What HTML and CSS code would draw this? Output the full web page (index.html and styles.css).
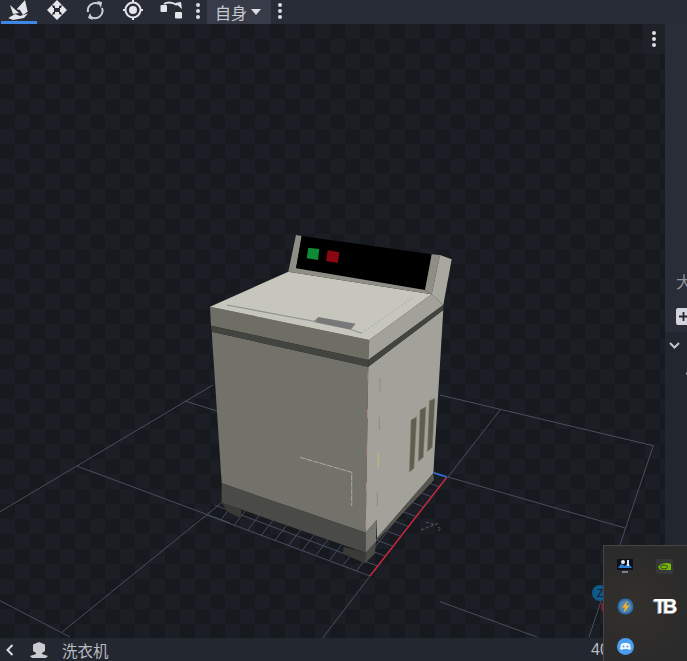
FILE: index.html
```html
<!DOCTYPE html>
<html lang="zh">
<head>
<meta charset="utf-8">
<title>洗衣机</title>
<link rel="stylesheet" href="styles.css">
</head>
<body>
<div class="app">
  <header class="topbar">
    <div class="tool tool-active">
      <svg class="ico" width="36" height="21" viewBox="1 0 36 21"><g fill="#e4e5e8"><path d="M10 5l9 8-6 1z"/><path d="M16.700 9.300L25 0l2.700 11.700L23 15l-3-5z"/><path d="M8.300 18L15 14l5 2 8-2.500L24 18l-11 2z"/></g></svg>
    </div>
    <div class="tool">
      <svg class="ico" width="38" height="21" viewBox="0 0 38 21"><g fill="#e4e5e8"><path d="M19 0l5 5-3 1v2h-4V6l-3-1z"/><path d="M19 20l5-5-3-1v-2h-4v2l-3 1z"/><path d="M9 10l5-5 1 3h1v4h-1l-1 3z"/><path d="M29 10l-5-5-1 3h-1v4h1l1 3z"/></g></svg>
    </div>
    <div class="tool">
      <svg class="ico" width="38" height="21" viewBox="0 0 38 21"><g fill="none" stroke="#cfd0d5" stroke-width="2"><path d="M12 12a7.500 7.500 0 0 1 11-8"/><path d="M26 8a7.500 7.500 0 0 1-11 9"/></g><g fill="#cfd0d5"><path d="M21 1l5 1-1 6z"/><path d="M17 20l-5-2 2-5z"/></g></svg>
    </div>
    <div class="tool">
      <svg class="ico" width="38" height="21" viewBox="0 0 38 21"><circle cx="19" cy="10" r="7.500" fill="none" stroke="#e4e5e8" stroke-width="2"/><circle cx="19" cy="10" r="4" fill="#e4e5e8"/><path d="M19 0v3M19 17v3M9 10h3M26 10h3" stroke="#e4e5e8" stroke-width="2"/></svg>
    </div>
    <div class="tool">
      <svg class="ico" width="38" height="21" viewBox="0 0 38 21"><g fill="#e4e5e8"><rect x="8.500" y="5" width="6.500" height="7" rx="1"/><rect x="23" y="12" width="7" height="6.500" rx="1"/><path d="M23 3l6-1 1 7z"/></g><path d="M12 4c3-2 8-2 13 1" fill="none" stroke="#e4e5e8" stroke-width="2"/></svg>
    </div>
    <div class="dots"><i></i><i></i><i></i></div>
    <button class="space"><span>自身</span><i class="caret"></i></button>
    <div class="dots"><i></i><i></i><i></i></div>
  </header>

  <main class="main">
    <section class="viewport">
      <svg class="scene" width="665" height="614" viewBox="0 24 665 614">
        <g fill="none" stroke="#4a4e5e" stroke-width="1">
          <path d="M0 511.700L213 385M185 401L217 411M76.700 466L230 523M61.700 632.300L221.700 502.700M0 600.700L70 637"/>
          <path d="M440 395L653.300 445.700L589 637M500 410L448 477L625 528M440 601.700L537 637M322 639L370 576"/>
          <path d="M207 515L370 576"/>
        </g>
        <g fill="none" stroke="#474b5c" stroke-width="1">
          <path d="M220.600 520.100l77-99M234.200 525.200l77-99M247.700 530.200l77-99M261.300 535.300l77-99M274.900 540.400l77-99M288.500 545.500l77-99M302.100 550.600l77-99M315.600 555.600l77-99M329.200 560.700l77-99M342.800 565.800l77-99M356.400 570.900l77-99"/>
          <path d="M377.700 566.100l-163-61M385.400 556.200l-163-61M393.100 546.300l-163-61M400.800 536.400l-163-61M408.500 526.500l-163-61M416.200 516.600l-163-61M423.900 506.700l-163-61M431.600 496.800l-163-61M439.300 486.900l-163-61M447 477l-163-61"/>
        </g>
        <path class="axis-x" d="M370 576L447 477"/>
        <path class="axis-z" d="M434 473L447 477"/>

        <path class="m-shadow" d="M221.700 502.700L241.700 510L240 518L228 512Z"/>
        <path class="m-shadow" d="M343.300 546.700L365.700 552.700L365 563.300L343.300 554Z"/>
        <path class="m-foot" d="M365.700 552.700L376 541.700L375 553.300L365 563.300Z"/>

        <path class="m-front" d="M211.700 331.700L368.300 366.700L365.700 532.700L221.700 483.300Z"/>
        <path class="m-base" d="M221.700 483.300L365.700 532.700L365.700 552.700L221.700 502.700Z"/>
        <path class="m-side" d="M368.300 366.700L443.300 310L433.300 473.300L377 538L376.700 520L365.700 532.700Z"/>
        <path class="m-base-side" d="M433.300 473.300L434 480L376 541.700L377 538Z"/>
        <path class="m-corner" d="M365.700 532.700L376.700 520L376 541.700L365.700 552.700Z"/>
        <path class="m-edge" d="M368.200 372L366 530"/>

        <path class="m-strip" d="M210 306.700L369.300 340L368.300 360L211 325.700Z"/>
        <path class="m-band" d="M211 325.700L368.300 360L368.300 366.700L211.700 331.700Z"/>
        <path class="m-side" d="M369.300 340L431.700 294.300L443.300 305L368.300 360Z"/>
        <path class="m-band" d="M368.300 360L443.300 305L443.300 310L368.300 366.700Z"/>
        <path class="m-top" d="M210 306.700L288.300 271.700L431.700 294.300L369.300 340Z"/>

        <path class="m-panel" d="M296 235L301.700 236L296 269L288.300 271.700Z"/>
        <path class="m-screen" d="M301.700 236L431.700 254.300L425 290L296 268.300Z"/>
        <path class="m-panel" d="M296 268.300L425 290L431.700 294.300L288.300 271.700Z"/>
        <path class="m-panel" d="M431.700 254.300L440 255L431.700 294.300L425 290Z"/>
        <path class="m-side-light" d="M440 255L451.700 259.300L443.300 305L431.700 294.300Z"/>
        <path class="m-green" d="M308.300 247.700L319.300 249L318 260L306.700 258.300Z"/>
        <path class="m-red" d="M327.700 250.300L339.300 252.300L337.700 263L326 261Z"/>

        <path class="m-handle" d="M318.300 317L355.700 323.700L350.700 329.700L313.300 322Z"/>
        <path class="m-groove" d="M226.700 305L318 322M350 329L361.700 333.300"/>
        <path class="m-seam" d="M361.700 333.300L413.300 297.300"/>

        <path class="m-vent" d="M411 420L416.700 416.700L414 468.300L409.300 472.300Z"/>
        <path class="m-vent" d="M420 410L426 406.700L423.300 457.300L418.300 461.700Z"/>
        <path class="m-vent" d="M429.300 400.700L435 398.300L432.300 447.300L427.300 451.700Z"/>
        <path class="m-door" d="M300 457.300L351.700 472.300L351.700 506"/>
        <path class="m-tick" d="M380 378v14M379.300 417v13M377.300 492v14"/>
        <path class="m-tick-y" d="M378.300 453v15"/>
        <path class="m-gizmo" d="M421 530L439 523M426 522l10 3M438 527l3 2l-3 2"/>

        <circle class="g-red" cx="609" cy="607" r="8"/>
        <circle class="g-blue" cx="600" cy="593" r="8"/>
        <text class="g-label" x="600" y="597">Z</text>
      </svg>
      <div class="corner-menu"><div class="dots"><i></i><i></i><i></i></div></div>
    </section>

    <aside class="side">
      <div class="side-top">
        <span class="side-label">大</span>
        <span class="side-add">
          <svg width="9" height="9" viewBox="0 0 9 9"><path d="M4.500 0v9M0 4.500h9" stroke="#23262e" stroke-width="1.800"/></svg>
        </span>
      </div>
      <div class="side-tree">
        <svg class="chev" width="11" height="7" viewBox="0 0 11 7"><path d="M1 1l4.500 4.500L10 1" fill="none" stroke="#c4c6cc" stroke-width="2"/></svg>
        <i class="tree-mark"></i>
        <i class="tree-dot"></i>
      </div>
    </aside>
  </main>

  <footer class="bottombar">
    <svg class="back" width="8" height="12" viewBox="0 0 8 12"><path d="M6.500 1L1.500 6l5 5" fill="none" stroke="#dcdde1" stroke-width="2"/></svg>
    <svg class="model" width="20" height="16" viewBox="0 0 20 16"><path d="M10 0l6 2.500V9l-3 2v1l6 2-2 2H3l-2-2 6-2v-1L4 9V2.500z" fill="#c9cbd0"/></svg>
    <span class="title">洗衣机</span>
    <span class="zoom">40</span>
  </footer>

  <div class="tray">
    <svg width="18" height="16" viewBox="0 0 18 16"><rect width="16" height="11" x="1" y="1" fill="#0c1018"/><path d="M2 10l3-4 4 2 3-3 4 5z" fill="#2f7fd6"/><circle cx="7" cy="4" r="2" fill="#e8eef5"/><rect x="11" y="2" width="2" height="6" fill="#dfe7f0"/><path d="M6 13h6v2H6z" fill="#7c8088"/></svg>
    <svg width="17" height="15" viewBox="0 0 17 15"><rect width="17" height="15" rx="2" fill="#36383a"/><path d="M2 8c3-4 9-5 13-3v6H6C4 11 3 10 2 8z" fill="#76b900"/><ellipse cx="8" cy="8" rx="3.500" ry="2" fill="none" stroke="#36383a"/></svg>
    <svg width="17" height="17" viewBox="0 0 17 17"><circle cx="8.500" cy="8.500" r="8" fill="#2a6cb0"/><circle cx="8.500" cy="8.500" r="6" fill="#5b86a8"/><path d="M11 2L5 9.500h3L6.500 15 12.500 7.500H9z" fill="#f5b32a"/></svg>
    <span class="tray-tb">TB</span>
    <svg width="17" height="17" viewBox="0 0 17 17"><circle cx="8.500" cy="8.500" r="8.500" fill="#4a9df0"/><path d="M4 6c2-1.500 7-1.500 9 0l1 5-2 1-1-1H6l-1 1-2-1z" fill="#f4f8fc"/><circle cx="6.500" cy="8.500" r="1" fill="#4a9df0"/><circle cx="10.500" cy="8.500" r="1" fill="#4a9df0"/></svg>
  </div>
</div>
</body>
</html>
```

FILE: styles.css
```css
* { box-sizing: border-box; }
html, body { margin: 0; padding: 0; height: 100%; background: #282c36; }
.app {
  position: relative;
  width: 687px;
  height: 661px;
  overflow: hidden;
  display: flex;
  flex-direction: column;
  font-family: "Noto Sans CJK SC", "Liberation Sans", sans-serif;
  color: #c9cbd1;
}

.topbar {
  height: 24px;
  flex: none;
  display: flex;
  align-items: flex-start;
  background: #282c36;
  padding-left: 1px;
}
.tool { width: 38px; height: 24px; }
.tool-active { width: 36px; margin-right: 1px; border-bottom: 3px solid #3f87e6; }
.ico { display: block; }
.dots { width: 16px; height: 21px; display: flex; flex-direction: column; align-items: center; justify-content: center; gap: 2px; }
.dots i { width: 4px; height: 4px; border-radius: 50%; background: #dcdde1; }
.space {
  width: 64px;
  height: 24px;
  margin: 0 1px;
  padding: 0 0 0 8px;
  border: 0;
  display: flex;
  align-items: center;
  gap: 4px;
  background: #383c48;
  color: #c9cbd1;
  font: 16px/22px "Noto Sans CJK SC", sans-serif;
}
.caret { width: 0; height: 0; border: 5px solid transparent; border-top: 6px solid #dcdde1; border-bottom: 0; }

.main { flex: 1; min-height: 0; display: flex; }
.viewport {
  position: relative;
  width: 665px;
  flex: none;
  overflow: hidden;
  background-color: #1a1d24;
  background-image: repeating-conic-gradient(#1b1e25 0 25%, #16191e 0 50%);
  background-size: 30px 30px;
}
.scene { display: block; }
.corner-menu {
  position: absolute;
  top: 0;
  right: 0;
  width: 22px;
  height: 30px;
  display: flex;
  align-items: center;
  justify-content: center;
  background: #1e2128;
}

.axis-x { fill: none; stroke: #c8283c; stroke-width: 1.500; }
.axis-z { fill: none; stroke: #2d6fe0; stroke-width: 1.500; }
.m-shadow { fill: #3a3a36; }
.m-foot { fill: #4b4c47; }
.m-front { fill: #72726a; }
.m-base { fill: #4a4b47; }
.m-side { fill: #a3a29a; }
.m-side-light { fill: #a9a89f; }
.m-base-side { fill: #57574f; }
.m-corner { fill: #77776f; }
.m-edge { fill: none; stroke: #b08e8c; stroke-width: 1; stroke-dasharray: 9 28; }
.m-strip { fill: #6f6e64; }
.m-band { fill: #42443f; }
.m-top { fill: #c6c6bc; }
.m-panel { fill: #8f8e84; }
.m-screen { fill: #000; }
.m-green { fill: #0f8a35; }
.m-red { fill: #8a0712; }
.m-handle { fill: #77787a; }
.m-groove { fill: none; stroke: #8e938f; stroke-width: 1.200; }
.m-seam { fill: none; stroke: #98a3aa; stroke-width: 0.800; stroke-dasharray: 2 2; }
.m-vent { fill: #5d5e4f; stroke: #85856f; stroke-width: 0.500; }
.m-door { fill: none; stroke: #b9b9b0; stroke-width: 0.800; stroke-dasharray: 6 1; }
.m-tick { fill: none; stroke: #8a8a86; stroke-width: 1; }
.m-tick-y { fill: none; stroke: #c9b774; stroke-width: 1; }
.m-gizmo { fill: none; stroke: #565a68; stroke-width: 1; stroke-dasharray: 3 2; }
.g-red { fill: #8e1a2e; }
.g-blue { fill: #0f5a8c; }
.g-label { fill: #16191e; font: 11px "Liberation Sans", sans-serif; text-anchor: middle; }

.side { flex: 1; min-width: 0; display: flex; flex-direction: column; background: #292d37; }
.side-top { height: 307px; flex: none; position: relative; display: flex; flex-direction: column; justify-content: flex-end; padding: 0 0 6px 11px; overflow: hidden; }
.side-label { font-size: 16px; line-height: 22px; margin-bottom: 16px; color: #8f929a; white-space: nowrap; }
.side-add { width: 16px; height: 17px; flex: none; border-radius: 2px; background: #d3d4dc; display: flex; align-items: center; padding-left: 3px; }
.side-tree { flex: 1; position: relative; background: #22262e; border-top: 1px solid #2b2f38; }
.chev { position: absolute; left: 4px; top: 10px; }
.tree-mark { position: absolute; left: 22px; top: 9px; width: 2px; height: 12px; background: #7fb4ea; }
.tree-dot { position: absolute; left: 21px; top: 40px; width: 3px; height: 3px; border-radius: 50%; background: #a8aab0; }

.bottombar {
  height: 23px;
  flex: none;
  display: flex;
  align-items: center;
  background: #23272f;
  padding-left: 6px;
}
.back { flex: none; margin-right: 15px; }
.model { flex: none; margin-right: 13px; }
.title { font-size: 15.500px; line-height: 22px; color: #b9bbc2; }
.zoom { margin-left: auto; margin-right: 79px; width: 17px; font: 16px/22px "Liberation Sans", sans-serif; color: #b9bbc2; overflow: hidden; }

.tray {
  position: absolute;
  left: 603px;
  top: 545px;
  width: 84px;
  height: 116px;
  padding: 0 14px 0 12px;
  display: grid;
  grid-template-columns: 18px 18px;
  grid-auto-rows: 40px;
  column-gap: 21px;
  align-items: center;
  justify-items: center;
  background: #2b2b2b radial-gradient(circle at 30px 60px, #33302c, #2b2b2b 70%);
  border: solid #454545;
  border-width: 1px 0 0 1px;
}
.tray-tb { font: bold 20px/20px "Liberation Sans", sans-serif; color: #fff; letter-spacing: -3px; text-shadow: -1px 1px 0 #999; }
```
